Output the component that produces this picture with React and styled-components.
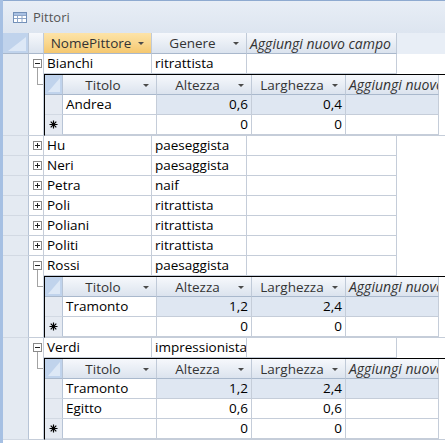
import React from 'react';
import styled, { createGlobalStyle } from 'styled-components';

const GRID = '#c5cdd9';
const SEL_BORDER = '#b7c4d6';

const GlobalStyle = createGlobalStyle`
  html, body { margin: 0; padding: 0; background: #fff; }
  body {
    width: 445px; height: 443px; overflow: hidden;
    font-family: "Open Sans", "Noto Sans", sans-serif;
  }
`;

const Window = styled.div`
  width: 445px;
  height: 443px;
  overflow: hidden;
  box-sizing: border-box;
  border-left: 3px solid #a6c0e3;
  background: #fff;
  display: flex;
  flex-direction: column;
`;

const TitleBar = styled.div`
  height: 32px;
  flex: none;
  border-top: 1px solid #8eaad0;
  background: linear-gradient(#e8eef6, #dde5f0);
  display: flex;
  align-items: center;
  gap: 6px;
  padding-left: 10px;
  font-size: 13px;
  color: #555;
`;

const HeaderRow = styled.div`
  display: flex;
  height: 21px;
  flex: none;
  background: #e8eef6;
`;

const SelectAll = styled.div`
  width: ${p => p.$w}px;
  flex: none;
  box-sizing: border-box;
  background: #c0d3ec;
  border-right: 1px solid ${SEL_BORDER};
  border-bottom: 1px solid #a9b8cc;
  display: flex;
  align-items: flex-end;
  justify-content: flex-end;
  padding: 0 2px 2px 0;
`;

const ColHeader = styled.div`
  width: ${p => p.$w}px;
  flex: none;
  box-sizing: border-box;
  border-right: 1px solid #c0cad8;
  border-bottom: 1px solid #a9b8cc;
  background: ${p => p.$active
    ? 'linear-gradient(#fde3a8, #f9d78e 50%, #f5c86f)'
    : 'linear-gradient(#f6f8fc, #e9eef5 50%, #dbe3ee)'};
  display: flex;
  align-items: center;
  font-size: 13.5px;
  color: #333;
  white-space: nowrap;
  overflow: hidden;
`;

const HeaderLabel = styled.span`
  flex: 1;
  text-align: ${p => (p.$italic ? 'left' : 'center')};
  font-style: ${p => (p.$italic ? 'italic' : 'normal')};
  font-size: ${p => (p.$italic ? '14px' : 'inherit')};
  padding-left: ${p => (p.$italic ? '3px' : '0')};
  overflow: hidden;
`;

const Arrow = styled.span`
  flex: none;
  width: 0;
  height: 0;
  border-left: 3px solid transparent;
  border-right: 3px solid transparent;
  border-top: 3px solid #4a4a4a;
  margin-right: 7px;
  margin-top: 1px;
`;

const Body = styled.div`
  display: flex;
  flex-direction: column;
`;

const Record = styled.div`
  display: flex;
`;

const RecordSelector = styled.div`
  width: 26px;
  flex: none;
  box-sizing: border-box;
  background: #e4eaf2;
  border-right: 1px solid ${SEL_BORDER};
  border-bottom: 1px solid #d2d9e3;
`;

const Expander = styled.div`
  width: 15px;
  flex: none;
  box-sizing: border-box;
  border-right: 1px solid ${GRID};
  border-bottom: 1px solid ${GRID};
  display: flex;
  flex-direction: column;
  align-items: flex-start;
  padding: 5px 0 0 4px;
  min-height: 20px;
`;

const Connector = styled.div`
  width: 6px;
  height: 17px;
  margin-left: 4px;
  box-sizing: border-box;
  border-left: 1px solid #a3a3a3;
  border-bottom: 1px solid #a3a3a3;
`;

const Content = styled.div`
  flex: 1;
  display: flex;
  flex-direction: column;
  min-width: 0;
`;

const Row = styled.div`
  display: flex;
  height: 20px;
`;

const Cell = styled.div`
  width: ${p => p.$w}px;
  flex: none;
  box-sizing: border-box;
  height: 20px;
  border-right: 1px solid ${GRID};
  border-bottom: 1px solid ${GRID};
  padding: 0 3px;
  line-height: 19px;
  font-size: 13.5px;
  color: #000;
  white-space: nowrap;
  overflow: hidden;
  text-align: ${p => p.$align || 'left'};
  background: ${p => (p.$hl ? '#dfe7f2' : '#fff')};
`;

const Sub = styled.div`
  border-top: 1px solid #000;
  border-left: 1px solid #000;
  border-bottom: 1px solid ${GRID};
  display: flex;
  flex-direction: column;
`;

const SubHeaderRow = styled.div`
  display: flex;
  height: 20px;
`;

const SubSelector = styled.div`
  width: 18px;
  flex: none;
  box-sizing: border-box;
  height: 20px;
  background: #e5eaf2;
  border-right: 1px solid ${SEL_BORDER};
  border-bottom: 1px solid #d2d9e3;
  display: flex;
  align-items: center;
  justify-content: center;
`;

const Corner = ({ w, h }) => (
  <svg width={w} height={h} viewBox={`0 0 ${w} ${h}`}>
    <polygon points={`${w},0 ${w},${h} 0,${h}`} fill="#dde8f6" />
  </svg>
);

const TableIcon = () => (
  <svg width="14" height="11" viewBox="0 0 14 11">
    <rect x="0.5" y="0.5" width="13" height="10" fill="#fff" stroke="#7390b8" />
    <rect x="1" y="1" width="12" height="2" fill="#a9c1e3" />
    <path d="M1 3.5H13M1 6.5H13M4.5 3V10.5M9 3V10.5" stroke="#8ea6c8" strokeWidth="1" fill="none" />
  </svg>
);

const ToggleBox = ({ open }) => (
  <svg width="9" height="9" viewBox="0 0 9 9" style={{ flex: 'none' }}>
    <rect x="0.5" y="0.5" width="8" height="8" fill="#fff" stroke="#8a8a8a" />
    <path d="M2 4.5H7" stroke="#222" />
    {!open && <path d="M4.5 2V7" stroke="#222" />}
  </svg>
);

const NewRowMark = () => (
  <svg width="9" height="9" viewBox="0 0 9 9">
    <path d="M4.5 0.5V8.5M0.5 4.5H8.5M1.7 1.7L7.3 7.3M7.3 1.7L1.7 7.3" stroke="#000" strokeWidth="1.2" />
  </svg>
);

const MAIN_COLS = [
  { key: 'nome', label: 'NomePittore', w: 108, arrow: true, active: true },
  { key: 'genere', label: 'Genere', w: 95, arrow: true },
  { key: 'add', label: 'Aggiungi nuovo campo', w: 150, italic: true },
];

const SUB_COLS = [
  { label: 'Titolo', w: 94, arrow: true },
  { label: 'Altezza', w: 95, arrow: true },
  { label: 'Larghezza', w: 94, arrow: true },
  { label: 'Aggiungi nuovo campo', w: 93, italic: true },
];

const DATA = [
  { nome: 'Bianchi', genere: 'ritrattista', quadri: [['Andrea', '0,6', '0,4']] },
  { nome: 'Hu', genere: 'paeseggista' },
  { nome: 'Neri', genere: 'paesaggista' },
  { nome: 'Petra', genere: 'naif' },
  { nome: 'Poli', genere: 'ritrattista' },
  { nome: 'Poliani', genere: 'ritrattista' },
  { nome: 'Politi', genere: 'ritrattista' },
  { nome: 'Rossi', genere: 'paesaggista', quadri: [['Tramonto', '1,2', '2,4']] },
  {
    nome: 'Verdi',
    genere: 'impressionista',
    quadri: [['Tramonto', '1,2', '2,4'], ['Egitto', '0,6', '0,6']],
  },
];

function Header({ cols }) {
  return cols.map(c => (
    <ColHeader key={c.label} $w={c.w} $active={c.active}>
      <HeaderLabel $italic={c.italic}>{c.label}</HeaderLabel>
      {c.arrow && <Arrow />}
    </ColHeader>
  ));
}

function SubDatasheet({ quadri }) {
  return (
    <Sub>
      <SubHeaderRow>
        <SelectAll $w={18}>
          <Corner w={12} h={14} />
        </SelectAll>
        <Header cols={SUB_COLS} />
      </SubHeaderRow>
      {quadri.map((q, i) => (
        <Row key={i}>
          <SubSelector />
          <Cell $w={94}>{q[0]}</Cell>
          <Cell $w={95} $align="right" $hl={i === 0}>{q[1]}</Cell>
          <Cell $w={94} $align="right" $hl={i === 0}>{q[2]}</Cell>
          <Cell $w={93} $hl={i === 0} />
        </Row>
      ))}
      <Row>
        <SubSelector>
          <NewRowMark />
        </SubSelector>
        <Cell $w={94} />
        <Cell $w={95} $align="right">0</Cell>
        <Cell $w={94} $align="right">0</Cell>
        <Cell $w={93} />
      </Row>
    </Sub>
  );
}

export default function App() {
  return (
    <>
      <GlobalStyle />
      <Window>
        <TitleBar>
          <TableIcon />
          <span>Pittori</span>
        </TitleBar>
        <HeaderRow>
          <SelectAll $w={26}>
            <Corner w={18} h={14} />
          </SelectAll>
          <ColHeader $w={15} />
          <Header cols={MAIN_COLS} />
        </HeaderRow>
        <Body>
          {DATA.map(r => {
            const open = !!r.quadri;
            return (
              <Record key={r.nome}>
                <RecordSelector />
                <Expander>
                  <ToggleBox open={open} />
                  {open && <Connector />}
                </Expander>
                <Content>
                  <Row>
                    <Cell $w={108}>{r.nome}</Cell>
                    <Cell $w={95}>{r.genere}</Cell>
                    <Cell $w={150} />
                  </Row>
                  {open && <SubDatasheet quadri={r.quadri} />}
                </Content>
              </Record>
            );
          })}
        </Body>
      </Window>
    </>
  );
}
